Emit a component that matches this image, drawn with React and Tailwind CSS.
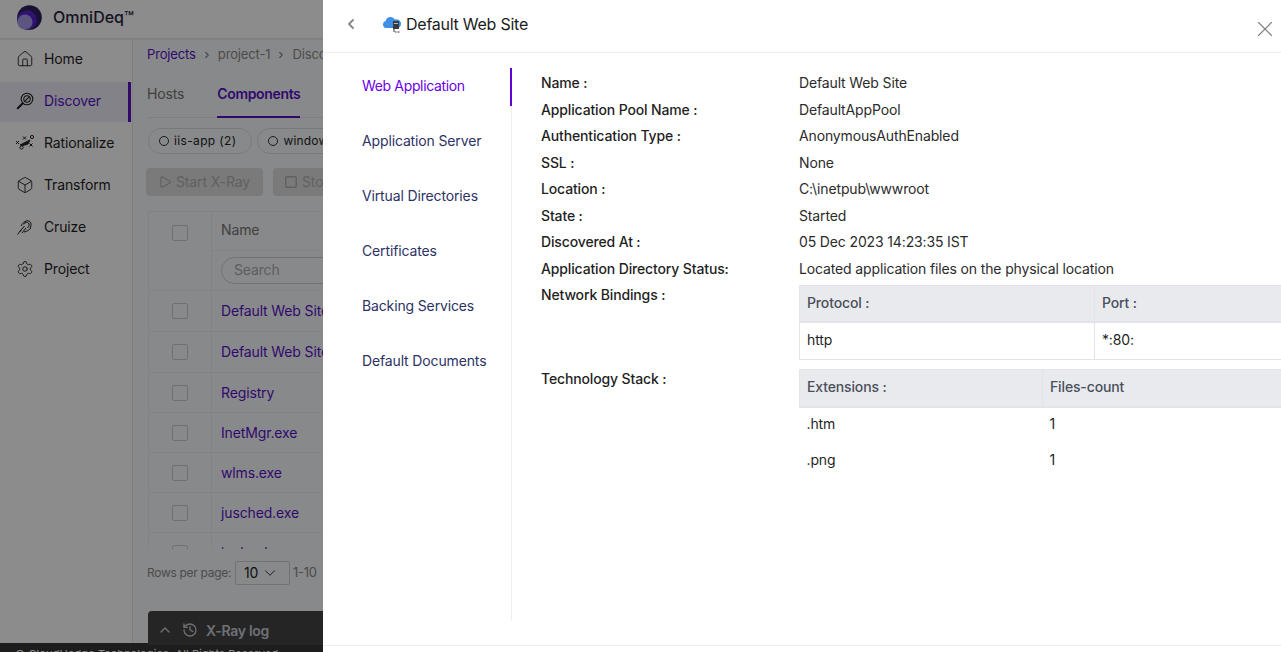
import React from "react";
import { Home, Box, Settings, ChevronRight, ChevronLeft, ChevronUp, ChevronDown, Play, Square, X, History } from "lucide-react";

function Logo() {
  return (
    <svg width="25" height="25" viewBox="0 0 25 25" className="shrink-0">
      <circle cx="12.5" cy="12.5" r="12.3" fill="#2c1f5c" />
      <circle cx="10" cy="15" r="9.8" fill="#5a1fd0" />
      <circle cx="8" cy="17" r="7.6" fill="#a99ae8" />
    </svg>
  );
}
function DiscoverIcon() {
  return (
    <svg width="18" height="18" viewBox="0 0 18 18" fill="none" stroke="#1f1f1f" strokeWidth="1.1" className="shrink-0">
      <circle cx="11" cy="7" r="5.8" />
      <circle cx="11" cy="7" r="3.2" />
      <path d="M9.2 8.8l3.6-3.6" />
      <path d="M6.8 11.2l-5 5" strokeWidth="2" strokeLinecap="round" />
    </svg>
  );
}
function RationalizeIcon() {
  return (
    <svg width="20" height="18" viewBox="0 0 20 18" fill="none" stroke="#1f1f1f" strokeWidth="1" className="shrink-0">
      <path d="M1 7l3 3M4 7l-3 3M8 2.5l3 3M11 2.5l-3 3M14.500 9.500l3 3M17.500 9.500l-3 3" />
      <circle cx="17" cy="3" r="1.6" />
      <circle cx="6.500" cy="13.500" r="1.600" />
      <path d="M5 11l10-5-2 4-5 1.500z" fill="#1f1f1f" />
    </svg>
  );
}
function CruizeIcon() {
  return (
    <svg width="18" height="18" viewBox="0 0 18 18" fill="none" stroke="#1f1f1f" strokeWidth="1" className="shrink-0">
      <path d="M1.500 16.500l4-5M3.500 14l5-6M6 15l4-5M5 8c2-4 6-6 8-5 2 1 3 4 1 7M8 14c3-.5 5-2 7-4M7.500 6c2-2 4-2 5-1s1 3-1 5" />
    </svg>
  );
}
function CloudIcon() {
  return (
    <svg width="20" height="20" viewBox="0 0 20 20" className="shrink-0">
      <path d="M4.500 14a3.500 3.500 0 0 1-.8-6.900A5 5 0 0 1 13 5.500a4 4 0 0 1 3 8.500z" fill="#3f8fe8" />
      <rect x="11" y="7" width="6" height="8" fill="#3a3a3a" />
      <rect x="12" y="9" width="4" height="1" fill="#bbbbbb" />
      <path d="M12 15v3" stroke="#333333" />
      <path d="M13 18h1.500M15.500 18h2" stroke="#333333" strokeWidth="1.200" />
    </svg>
  );
}

const nav = [
  { label: "Home", icon: <Home size={18} strokeWidth={1.2} color="#1f1f1f" /> },
  { label: "Discover", icon: <DiscoverIcon />, active: true },
  { label: "Rationalize", icon: <RationalizeIcon /> },
  { label: "Transform", icon: <Box size={18} strokeWidth={1.2} color="#1f1f1f" /> },
  { label: "Cruize", icon: <CruizeIcon /> },
  { label: "Project", icon: <Settings size={18} strokeWidth={1.2} color="#1f1f1f" /> },
];

const rows = [
  ["Default Web Site", "h-[41px]", "pb-[2px]"],
  ["Default Web Site", "h-[41px]", "pb-[2px]"],
  ["Registry", "h-[40px]", ""],
  ["InetMgr.exe", "h-[40px]", ""],
  ["wlms.exe", "h-[40px]", ""],
  ["jusched.exe", "h-[40px]", ""],
  ["jucheck.exe", "h-[40px]", ""],
];

const details = [
  ["Name :", "Default Web Site"],
  ["Application Pool Name :", "DefaultAppPool"],
  ["Authentication Type :", "AnonymousAuthEnabled"],
  ["SSL :", "None"],
  ["Location :", "C:\\inetpub\\wwwroot"],
  ["State :", "Started"],
  ["Discovered At :", "05 Dec 2023 14:23:35 IST"],
  ["Application Directory Status:", "Located application files on the physical location"],
];

const sideItems = ["Web Application", "Application Server", "Virtual Directories", "Certificates", "Backing Services", "Default Documents"];

export default function App() {
  return (
    <div className="relative h-[652px] w-[1281px] overflow-hidden bg-white text-[14px] tracking-[-0.14px] font-['Inter','Noto_Sans',sans-serif] text-[#1f1f1f]">
      {/* underlying page */}
      <div className="flex h-full flex-col">
        <header className="flex h-[40px] shrink-0 items-center gap-[11px] border-b-[2px] border-[#ebebeb] pb-[4px] pl-[17px]">
          <Logo />
          <span className="text-[16px] font-medium tracking-[0px] text-[#2a2440]">OmniDeq™</span>
        </header>
        <div className="flex min-h-0 flex-1">
          <aside className="flex w-[133px] shrink-0 flex-col gap-[2px] border-r-[1px] border-[#e8e8e8]">
            {nav.map((n) => (
              <div
                key={n.label}
                className={`flex h-[40px] shrink-0 items-center gap-[10px] pb-[2px] pl-[16px] ${n.active ? "mr-[1px] border-r-[3px] border-[#5a12c8] bg-[#eeedf7] text-[#5a12c8]" : ""}`}
              >
                <span className="flex w-[18px] shrink-0 justify-center">{n.icon}</span>
                <span className="pb-[2px] text-[14px]">{n.label}</span>
              </div>
            ))}
          </aside>
          <main className="flex min-w-0 flex-1 flex-col bg-[#f8fafb] pl-[14px]">
            <div className="flex h-[29px] shrink-0 items-center gap-[6px] pt-[1px] text-[13px] text-[#8a8a8a]">
              <span className="text-[#5a12c8]">Projects</span>
              <ChevronRight size={10} strokeWidth={3} />
              <span>project-1</span>
              <ChevronRight size={10} strokeWidth={3} />
              <span>Discover</span>
            </div>
            <div className="flex h-[49px] shrink-0 items-end gap-[33px] border-b-[1px] border-[#e8e8e8]">
              <span className="pb-[13px] text-[#757575]">Hosts</span>
              <span className="-mb-[1px] border-b-[2px] border-[#5a12c8] pb-[12px] font-semibold tracking-[-0.35px] text-[#5a12c8]">Components</span>
            </div>
            <div className="flex shrink-0 gap-[5px] pl-[1px] pt-[10px]">
              <span className="flex h-[26px] shrink-0 items-center gap-[5px] rounded-full border-[1px] border-[#dddddd] pl-[10px] pr-[15px] text-[12px] tracking-[0.35px]"><span className="size-[10px] rounded-full border-[1px] border-[#333333]" />iis-app (2)</span>
              <span className="flex h-[26px] shrink-0 items-center gap-[5px] rounded-full border-[1px] border-[#dddddd] pl-[10px] pr-[15px] text-[12px] tracking-[0.2px]"><span className="size-[10px] rounded-full border-[1px] border-[#333333]" />windows</span>
            </div>
            <div className="-ml-[1px] flex shrink-0 gap-[10px] pt-[14px]">
              <span className="flex h-[28px] w-[117px] shrink-0 items-center gap-[4px] rounded-[4px] bg-[#dedede] pb-[1px] pl-[12px] text-[#b0b0b0]"><Play size={14} />Start X-Ray</span>
              <span className="flex h-[28px] w-[117px] shrink-0 items-center gap-[4px] rounded-[4px] bg-[#dedede] pb-[1px] pl-[11px] text-[#b0b0b0]"><Square size={14} strokeWidth={2.5} />Stop X-Ray</span>
            </div>
            <div className="ml-[1px] mt-[15px] h-[338px] shrink-0 overflow-hidden">
              <div className="flex h-[80px] border-[1px] border-[#eeeeee]">
                <div className="flex w-[63px] shrink-0 justify-center border-r-[1px] border-[#eeeeee] pt-[13px]"><span className="size-[16px] rounded-[2px] border-[1px] border-[#cccccc]" /></div>
                <div className="min-w-0 flex-1">
                  <div className="flex h-[39px] items-center border-b-[1px] border-[#eeeeee] pb-[3px] pl-[9px] text-[#757575]">Name</div>
                  <div className="ml-[9px] mt-[6px] flex h-[27px] items-center rounded-full border-[1px] border-[#d0d0d0] pb-[2px] pl-[12px] text-[#aaaaaa]">Search</div>
                </div>
              </div>
              {rows.map(([r, h, p], i) => (
                <div key={i} className={`flex ${h} border-x-[1px] border-b-[1px] border-[#eeeeee]`}>
                  <div className="flex w-[63px] shrink-0 items-center justify-center border-r-[1px] border-[#eeeeee]"><span className="size-[16px] rounded-[2px] border-[1px] border-[#cccccc]" /></div>
                  <div className={`flex items-center whitespace-nowrap pl-[9px] text-[#5a12c8] ${p}`}>{r}</div>
                </div>
              ))}
            </div>
            <div className="flex h-[46px] shrink-0 items-center gap-[3px] pt-[1px] text-[12px] tracking-[-0.3px] text-[#8a8a8a]">
              <span>Rows per page:</span>
              <span className="ml-[1px] flex h-[24px] w-[55px] shrink-0 items-center justify-between rounded-[2px] border-[1px] border-[#d0d0d0] pl-[8px] pr-[10px] text-[14px] text-[#222222]">10<ChevronDown size={18} strokeWidth={1.2} /></span>
              <span className="text-[13px]">1-10</span>
            </div>
          </main>
        </div>
        <footer className="h-[9px] shrink-0 overflow-hidden whitespace-nowrap bg-[#363636] pl-[15px] pt-[4px] text-[11px] leading-[14px] tracking-[0.13px] text-white">© CloudHedge Technologies. All Rights Reserved.</footer>
      </div>
      <div className="absolute bottom-[7px] left-[148px] flex h-[34px] w-[300px] items-center rounded-t-[4px] bg-[#444444] pl-[9px] pt-[4px] text-[#c8ccd4]">
        <ChevronUp size={16} />
        <History size={16} className="ml-[9px]" />
        <span className="ml-[8px] text-[14px] font-semibold tracking-[-0.3px]">X-Ray log</span>
      </div>

      {/* overlay */}
      <div className="absolute inset-0 bg-black/45" />

      {/* drawer */}
      <div className="absolute inset-y-0 right-0 flex w-[958px] flex-col overflow-hidden bg-white">
        <div className="flex h-[53px] shrink-0 items-center border-b-[1px] border-[#eeeeee] pb-[4px] pl-[20px]">
          <ChevronLeft size={16} strokeWidth={3} color="#8a8a8a" className="shrink-0" />
          <span className="ml-[23px] flex"><CloudIcon /></span>
          <span className="ml-[4px] text-[16px] tracking-[-0.25px] text-[#1c1c1c]">Default Web Site</span>
          <X size={26} strokeWidth={1} color="#808080" className="absolute right-[3px] top-[16px]" />
        </div>
        <div className="flex min-h-0 flex-1">
          <nav className="mt-[15px] h-[553px] w-[189px] shrink-0 border-r-[1px] border-[#eeeeee]">
            {sideItems.map((s, i) => (
              <div
                key={s}
                className={`flex h-[38px] items-center pb-[4px] pl-[39px] ${i > 0 ? "mt-[17px] text-[#2d3266]" : "-mr-[1px] border-r-[2px] border-[#6200d9] tracking-[-0.35px] text-[#6a00f0]"}`}
              >
                {s}
              </div>
            ))}
          </nav>
          <section className="min-w-0 flex-1 pl-[29px] pt-[16.5px]">
            <div className="grid auto-rows-[26.5px] grid-cols-[258px_560px] items-center">
              {details.map(([k, v]) => (
                <React.Fragment key={k}>
                  <span className="font-medium text-[#1f1f1f]">{k}</span>
                  <span className="text-[#2b2b2b]">{v}</span>
                </React.Fragment>
              ))}
            </div>
            <div className="grid grid-cols-[258px_560px]">
              <span className="pt-[3px] font-medium leading-[20px] text-[#1f1f1f]">Network Bindings :</span>
              <table className="mt-[3px] w-[560px] table-fixed border-collapse text-left">
                <thead>
                  <tr className="h-[37px] bg-[#e9eaee] text-[#4a4f5a]">
                    <th className="w-[295px] border-x-[1px] border-b-[2px] border-t-[1px] border-[#e3e4e8] pb-[2px] pl-[7px] font-medium">Protocol :</th>
                    <th className="border-x-[1px] border-b-[2px] border-t-[1px] border-[#e3e4e8] pb-[2px] pl-[7px] font-medium">Port :</th>
                  </tr>
                </thead>
                <tbody>
                  <tr className="h-[37px]">
                    <td className="border-[1px] border-[#e3e4e8] pb-[3px] pl-[7px]">http</td>
                    <td className="border-[1px] border-[#e3e4e8] pb-[3px] pl-[7px]">*:80:</td>
                  </tr>
                </tbody>
              </table>
              <span className="mt-[9px] font-medium leading-[20px] text-[#1f1f1f]">Technology Stack :</span>
              <table className="mt-[9px] w-[560px] table-fixed border-collapse text-left">
                <thead>
                  <tr className="h-[38px] bg-[#e9eaee] text-[#4a4f5a]">
                    <th className="w-[243px] border-x-[1px] border-b-[2px] border-t-[1px] border-[#e3e4e8] pb-[3px] pl-[7px] font-medium">Extensions :</th>
                    <th className="border-x-[1px] border-b-[2px] border-t-[1px] border-[#e3e4e8] pb-[3px] pl-[7px] font-medium">Files-count</th>
                  </tr>
                </thead>
                <tbody>
                  <tr className="h-[36px]"><td className="pb-[5px] pl-[7px]">.htm</td><td className="pb-[5px] pl-[7px]">1</td></tr>
                  <tr className="h-[36px]"><td className="pb-[3px] pl-[7px]">.png</td><td className="pb-[3px] pl-[7px]">1</td></tr>
                </tbody>
              </table>
            </div>
          </section>
        </div>
        <div className="h-[7px] shrink-0 border-t-[1px] border-[#eeeeee]" />
      </div>
    </div>
  );
}
